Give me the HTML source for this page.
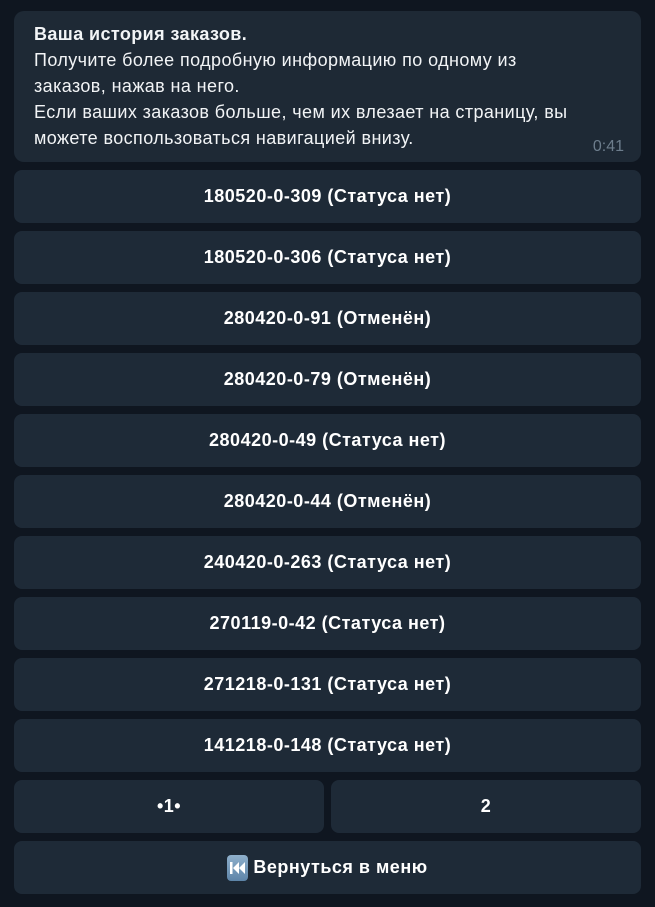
<!DOCTYPE html>
<html><head><meta charset="utf-8"><style>
body{margin:0;width:655px;height:907px;background:#0f1620;font-family:"Liberation Sans",sans-serif;color:#fff;position:relative;overflow:hidden}
.msg{position:absolute;left:14px;top:11px;width:627px;height:151px;background:#1e2935;border-radius:10px}
.txt{position:absolute;left:20px;top:10px;font-size:18px;line-height:26px;color:#f2f4f6;white-space:nowrap;letter-spacing:0.4px}
.t{position:absolute;right:17px;bottom:6px;font-size:16px;color:#6d7d8c}
.b{position:absolute;height:53px;background:#1e2a37;border-radius:8px;font-size:18px;font-weight:bold;letter-spacing:0.5px;display:flex;align-items:center;justify-content:center;color:#fff}
.ic{display:inline-block;width:21px;height:26px;background:linear-gradient(#8fb0cc,#5d84a8);border-radius:4px;margin-right:5px;position:relative}
.ic svg{position:absolute;left:3px;top:7px}
</style></head><body>
<div class="msg"><div class="txt"><b>Ваша история заказов.</b><br>Получите более подробную информацию по одному из<br>заказов, нажав на него.<br>Если ваших заказов больше, чем их влезает на страницу, вы<br>можете воспользоваться навигацией внизу.</div><div class="t">0:41</div></div>
<div class="b" style="left:14px;width:627px;top:170px">180520-0-309 (Статуса нет)</div>
<div class="b" style="left:14px;width:627px;top:231px">180520-0-306 (Статуса нет)</div>
<div class="b" style="left:14px;width:627px;top:292px">280420-0-91 (Отменён)</div>
<div class="b" style="left:14px;width:627px;top:353px">280420-0-79 (Отменён)</div>
<div class="b" style="left:14px;width:627px;top:414px">280420-0-49 (Статуса нет)</div>
<div class="b" style="left:14px;width:627px;top:475px">280420-0-44 (Отменён)</div>
<div class="b" style="left:14px;width:627px;top:536px">240420-0-263 (Статуса нет)</div>
<div class="b" style="left:14px;width:627px;top:597px">270119-0-42 (Статуса нет)</div>
<div class="b" style="left:14px;width:627px;top:658px">271218-0-131 (Статуса нет)</div>
<div class="b" style="left:14px;width:627px;top:719px">141218-0-148 (Статуса нет)</div>
<div class="b" style="left:14px;width:310px;top:780px">•1•</div>
<div class="b" style="left:331px;width:310px;top:780px">2</div>
<div class="b" style="left:14px;width:627px;top:841px"><span class="ic"><svg width="15" height="12" viewBox="0 0 15 12"><rect x="0" y="0" width="2.5" height="12" fill="#fff"/><path d="M9 0V12L3 6Z M15 0V12L9 6Z" fill="#fff"/></svg></span>Вернуться в меню</div>
</body></html>
